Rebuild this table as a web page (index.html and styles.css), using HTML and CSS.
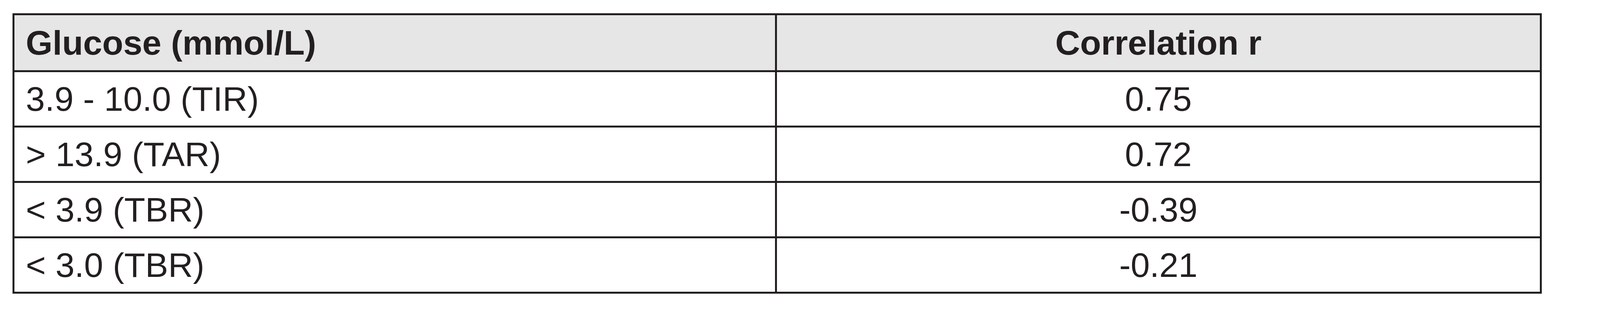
FILE: index.html
```html
<!DOCTYPE html>
<html lang="en">
<head>
<meta charset="utf-8">
<title>Glucose correlation</title>
<link rel="stylesheet" href="styles.css">
</head>
<body>
<main class="page">
  <table class="corr">
    <thead>
      <tr>
        <th class="c1">Glucose (mmol/L)</th>
        <th class="c2">Correlation r</th>
      </tr>
    </thead>
    <tbody>
      <tr><td class="c1">3.9 - 10.0 (TIR)</td><td class="c2">0.75</td></tr>
      <tr><td class="c1">&gt; 13.9 (TAR)</td><td class="c2">0.72</td></tr>
      <tr><td class="c1">&lt; 3.9 (TBR)</td><td class="c2">-0.39</td></tr>
      <tr class="last"><td class="c1">&lt; 3.0 (TBR)</td><td class="c2">-0.21</td></tr>
    </tbody>
  </table>
</main>
</body>
</html>
```
FILE: styles.css
```css
html, body {
  margin: 0;
  padding: 0;
  background: #ffffff;
}

body {
  font-family: "Liberation Sans", Arial, Helvetica, sans-serif;
  color: #231f20;
}

/* horizontal geometry is kept proportional to the 4961px-wide reference */
.page {
  box-sizing: border-box;
  width: 100%;
  padding: 34px 3.65% 0 0.786%;
}

.corr {
  width: 100%;
  border: 5px solid #231f20;
  border-spacing: 0;
  table-layout: fixed;
}

.corr th,
.corr td {
  box-sizing: border-box;
  padding: 0;
  vertical-align: middle;
  border-bottom: 5px solid #231f20;
  line-height: 1.15;
  white-space: nowrap;
  overflow: hidden;
}

.corr th {
  height: 146px;
  background: #e6e6e6;
  font-size: 88px;
  font-weight: 700;
}

.corr td {
  height: 142px;
  font-size: 88px;
  font-weight: 400;
}

.corr .last td {
  border-bottom: none;
  height: 137px;
}

.corr .c1 {
  width: 50%;
  text-align: left;
  padding-left: 0.74%;
  border-right: 5px solid #231f20;
}

.corr .c2 {
  text-align: center;
}
```
